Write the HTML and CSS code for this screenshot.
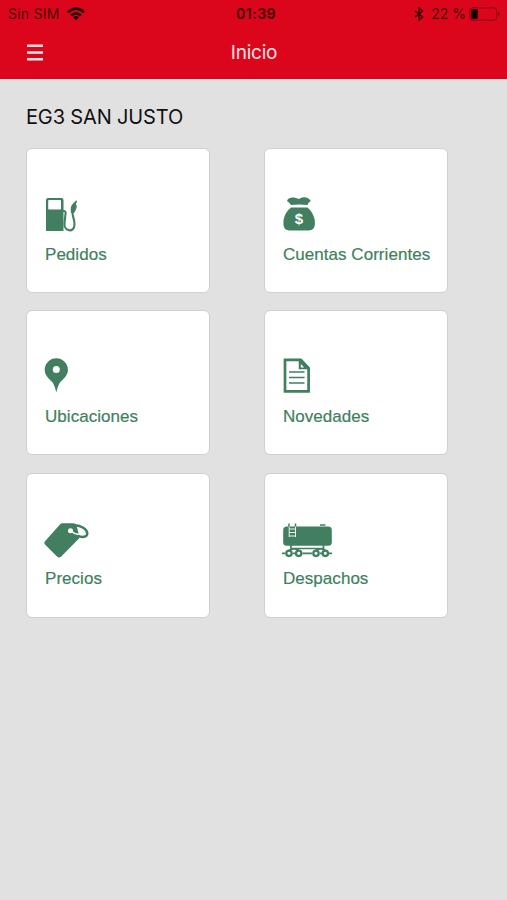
FILE: index.html
```html
<!DOCTYPE html>
<html lang="es">
<head>
<meta charset="utf-8">
<meta name="viewport" content="width=device-width, initial-scale=1">
<title>Inicio</title>
<link rel="stylesheet" href="styles.css">
</head>
<body>
<header class="header">
  <div class="status">
    <div class="status-left">
      <span class="carrier">Sin SIM</span>
      <svg class="wifi" width="18" height="14" viewBox="0 0 18 14" fill="none" stroke="currentColor" stroke-width="2.6"><path d="M1 5.2Q9-2 17 5.2M4 8.6Q9 4.200 14 8.6"/><path d="M9 13.200 6 10.2Q9 8 12 10.2Z" fill="currentColor" stroke="none"/></svg>
    </div>
    <span class="time">01:39</span>
    <div class="status-right">
      <svg class="bluetooth" width="10" height="14" viewBox="0 0 10 14" fill="none" stroke="currentColor" stroke-width="1.6"><path d="M1 3.8 8.5 10 5 13V1L8.5 4 1 10.2"/></svg>
      <span class="percent">22 %</span>
      <svg class="battery" width="32" height="14" viewBox="0 0 32 14"><rect x=".8" y=".8" width="27" height="12.4" rx="3" fill="none" stroke="#7d0210" stroke-width="1"/><rect x="2.300" y="2.300" width="6.500" height="9.400" rx="1" fill="#100002"/><path d="M29.3 4.5Q31.5 7 29.3 9.5Z" fill="#7d0210"/></svg>
    </div>
  </div>
  <nav class="nav">
    <svg class="menu" width="16" height="17" viewBox="0 0 16 17" fill="none" stroke="currentColor" stroke-width="2.4"><path d="M0 1.8H16M0 8.5H16M0 15.2H16"/></svg>
    <h1 class="title">Inicio</h1>
  </nav>
</header>
<main class="main">
  <h2 class="station">EG3 SAN JUSTO</h2>
  <div class="grid">
    <a class="card">
      <svg class="icon" viewBox="0 0 54 38"><path fill="currentColor" fill-rule="evenodd" d="M4 3H17.500Q19.500 3 19.500 5V36H2V5Q2 3 4 3ZM4.200 6V13.500Q4.200 14.500 5 14.500H16Q17 14.500 17 13.500V6Q17 5 16 5H5Q4.200 5 4.200 6Z"/><path fill="none" stroke="currentColor" stroke-width="2.100" d="M19 15.700Q22.300 16 21.500 19L20.500 28C19.500 37 30.500 38 30.500 29.500C31 24 27 20 29 15"/><path fill="currentColor" d="M27 18Q26 12 28.200 9.500L32.300 5.300L33 6.500L32 9L32.800 12Q31.500 16 30 18Z"/></svg>
      <span class="label">Pedidos</span>
    </a>
    <a class="card">
      <svg class="icon" viewBox="0 0 54 38"><path fill="currentColor" d="M9 10Q7 7 5 6Q6 2 12 2.500Q15 3 17 4Q19 2.500 22 2.300Q26 2 28.800 6Q26.500 7 25.500 10Q17 9 9 10ZM9 12.500H25.500Q31 17 32.800 25Q34 35.500 27 35.500H7Q.4 35.500 1.500 25Q3 17 9 12.500Z"/><text class="coin" x="17" y="29.200">$</text></svg>
      <span class="label">Cuentas Corrientes</span>
    </a>
    <a class="card">
      <svg class="icon" viewBox="0 0 54 38"><path fill="currentColor" fill-rule="evenodd" d="M12.300 1.300A11.600 11.600 0 0 1 23.900 13C23.900 19 18.500 22.500 16 25.500Q14 28.500 12.300 35.500Q10.600 28.500 8.600 25.500C6.100 22.500.7 19 .7 13A11.600 11.600 0 0 1 12.300 1.300ZM12.300 9A3.500 3.500 0 1 0 12.300 16A3.500 3.500 0 1 0 12.300 9Z"/></svg>
      <span class="label">Ubicaciones</span>
    </a>
    <a class="card">
      <svg class="icon" viewBox="0 0 54 38" fill="none" stroke="currentColor"><path stroke-width="2.700" d="M3 2.800H18.800L26.600 11V34.300H3Z"/><path fill="currentColor" stroke-width="1.500" d="M17.500 3V11.500H26Z"/><path fill="#fff" stroke="none" d="M18.800 7V10.400H22.200Z"/><path stroke-width="1.600" d="M7 15H22.500M7 20.500H22.500M7 26H22.500"/></svg>
      <span class="label">Novedades</span>
    </a>
    <a class="card">
      <svg class="icon" viewBox="0 0 54 38"><path fill="currentColor" fill-rule="evenodd" d="M18 3.300H29.500Q31.500 3.300 32.300 5L35.500 16.500Q35.600 18 34.500 19L17 36.800Q15 38.200 13 36.500L1 24.500Q-.3 23 1 21.200L15.500 5Q16.500 3.600 18 3.300ZM26.500 8.200A2.500 2.500 0 1 0 26.500 13.200A2.500 2.500 0 1 0 26.500 8.200Z"/><path fill="none" stroke="#fff" stroke-width="1.500" d="M26.500 10.700Q30 14 35.500 14.500"/><path fill="none" stroke="currentColor" stroke-width="2.500" d="M31 5.300C37 5.500 43 9 43.300 13.500C43 17.500 38 17.500 34 15.800"/></svg>
      <span class="label">Precios</span>
    </a>
    <a class="card">
      <svg class="icon" viewBox="0 0 54 38"><rect fill="currentColor" x="1.200" y="6.500" width="48.600" height="19.300" rx="3.500"/><path fill="none" stroke="currentColor" stroke-width="1.500" d="M7 3.500V7M13.500 3.500V7M38 5H43.500"/><path fill="none" stroke="#fff" stroke-width=".9" d="M7.200 6.500V17M13.500 6.500V17M7.200 9H13.500M7.200 12.500H13.500M7.200 16H13.500"/><path fill="none" stroke="currentColor" stroke-width="1.700" d="M9 25V28.500H41.500V25M0 33.300H3M20.500 33.300H30M47 33.300H50M7 30Q12 28 16.700 30M34 30Q39 28 43.300 30M11 33.300H13M38 33.300H40"/><g fill="#fff" stroke="currentColor" stroke-width="2.300"><circle cx="7" cy="33.300" r="2.700"/><circle cx="16.700" cy="33.300" r="2.700"/><circle cx="34" cy="33.300" r="2.700"/><circle cx="43.300" cy="33.300" r="2.700"/></g></svg>
      <span class="label">Despachos</span>
    </a>
  </div>
</main>
</body>
</html>
```
FILE: styles.css
```css
* { box-sizing: border-box; }

body {
  margin: 0;
  min-height: 900px;
  background: #e1e1e1;
  font-family: Inter, "Liberation Sans", sans-serif;
}

.header {
  height: 79px;
  background: #db061b;
}

.status {
  display: grid;
  grid-template-columns: 1fr auto 1fr;
  align-items: center;
  height: 27px;
  padding: 0 6px 0 8px;
  color: #4b0007;
  font-size: 14px;
}

.status-left,
.status-right {
  display: flex;
  align-items: center;
}

.status-left { gap: 7px; }
.carrier { letter-spacing: .25px; }
.status-right { justify-content: flex-end; }
.wifi { color: #210003; }
.time { padding-left: 3px; font-weight: 700; font-size: 14px; letter-spacing: .3px; }
.bluetooth { margin-right: 7px; }
.percent { margin-right: 3px; white-space: nowrap; }

.nav {
  display: grid;
  grid-template-columns: 42px 1fr 42px;
  align-items: center;
  height: 50px;
  padding: 0 0 0 27px;
  color: #ffe4e7;
}

.nav .title {
  margin: 0;
  padding-right: 26px;
  font-size: 19px;
  font-weight: 400;
  letter-spacing: -.25px;
  text-align: center;
}

.main { padding: 24px 59px 0 26px; }

.station {
  margin: 0;
  padding-top: 1px;
  height: 45px;
  color: #111;
  font-size: 20px;
  font-weight: 400;
  line-height: 27px;
  letter-spacing: -.15px;
}

.grid {
  display: grid;
  grid-template-columns: 184px 184px;
  grid-auto-rows: 145px;
  gap: 17.4px 54px;
}

.card {
  display: flex;
  flex-direction: column;
  align-items: flex-start;
  padding: 46px 0 0 17px;
  border: 1px solid #cfcfcf;
  border-radius: 6px;
  background: #fff;
  color: #417f60;
}

.icon {
  width: 54px;
  height: 38px;
}

.label {
  margin: 11.5px 0 0 1px;
  font-family: "Liberation Sans", Arial, sans-serif;
  font-size: 17px;
  line-height: 20px;
  letter-spacing: .04px;
  white-space: nowrap;
  -webkit-text-stroke: .2px currentColor;
}

.coin {
  fill: #fff;
  font: 700 15px "Liberation Sans", Arial, sans-serif;
  text-anchor: middle;
}
```
